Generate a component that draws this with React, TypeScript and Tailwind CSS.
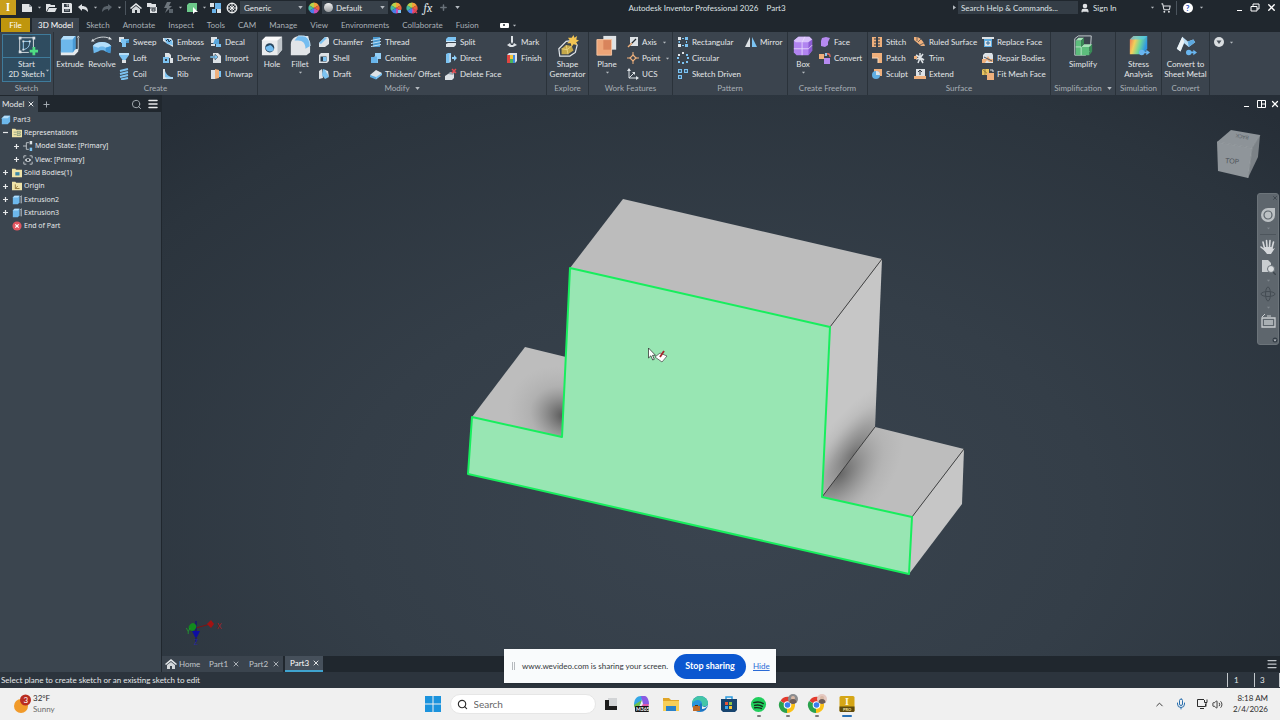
import type { ReactNode } from "react";
import { ChevronUp, Home, Menu, Mic, Plus, Search, ShoppingCart, User, Volume2, X } from "lucide-react";

const BLUE = "#7cc3f2";
const PALE = "#dde2e6";
const ORANGE = "#efb07c";
const PURPLE = "#b68af0";

// Small command icons, drawn on a 12 x 12 grid
const smallIcons: Record<string, ReactNode> = {
  sweep: (
    <>
      <path d="M1 1h5v5H1z" fill={PALE} />
      <path d="M3 3h8v4H8v4H4V7H3z" fill={BLUE} />
      <path d="M8 7h3V4L8 5z" fill="#4a9bd2" />
    </>
  ),
  loft: (
    <>
      <path d="M1 1h10v2L7.500 8h-3L1 3z" fill={BLUE} />
      <path d="M1 1h10v2H1z" fill="#b7def7" />
      <path d="M4 8h4v3H4z" fill={PALE} />
    </>
  ),
  coil: (
    <path d="M2 3 10 1M2 6l8-2M2 9l8-2M3 11.500l7-1.500" stroke={BLUE} strokeWidth="2" fill="none" />
  ),
  emboss: (
    <>
      <path d="M1 2h8l2 3v6L1 5z" fill={PALE} />
      <path d="m2 2 8 2 1 5-6-1z" fill={BLUE} />
      <path d="m4 5 2-2 1 3 2-2" stroke="#23405a" fill="none" />
    </>
  ),
  derive: (
    <>
      <path d="M3 1h4l2 2v3H3z" fill={PALE} />
      <path d="M1 5h6v6H1z" fill={BLUE} />
      <path d="M8 6h3v5H8z" fill={PALE} />
      <path d="M3 7h2v2H3z" fill="#3b444e" />
    </>
  ),
  rib: (
    <>
      <path d="M1 1h2v8h8v2H1z" fill={PALE} />
      <path d="M3 3c1 3 3 5 6 6H3z" fill={BLUE} />
      <path d="M3 9h8v2H5z" fill="#a9d7f5" />
    </>
  ),
  decal: (
    <>
      <path d="M1 1h6v6H1z" fill={PALE} />
      <path d="M5 3h4v5H3z" fill="#59a7dc" />
      <path d="M6 8h5v3H6z" fill={BLUE} />
      <path d="M1 8h4v2H1z" fill={PALE} />
    </>
  ),
  import: (
    <>
      <path d="M3 1h5l3 3v7H3z" fill={PALE} />
      <path d="M0 4h5V2l3 3-3 3V6H0z" fill={BLUE} stroke="#3b444e" strokeWidth=".5" />
    </>
  ),
  unwrap: (
    <>
      <path d="M1 2h4v9H1z" fill={PALE} />
      <path d="m5 1 4 1v8l-4 1z" fill={ORANGE} />
      <path d="M9 3h2v6H9z" fill={BLUE} />
    </>
  ),
  chamfer: (
    <>
      <path d="m1 7 6-6h3l1 2v5l-4 3H1z" fill={PALE} />
      <path d="m1 7 6-6 2 1-6 6z" fill={BLUE} />
    </>
  ),
  shell: (
    <>
      <path d="m1 3 2-2h8v8l-2 2H1z" fill={PALE} />
      <path d="M2.500 4.500h6v5h-6z" fill="#24384a" />
      <path d="M5 5h3.500v4H5z" fill={BLUE} />
    </>
  ),
  draft: (
    <>
      <path d="M1 3 4 1l1 9-4 1z" fill={PALE} />
      <path d="m5 1 3 1 3 7-4 2-3-4z" fill={BLUE} />
      <path d="m7 2 3 1 1 6z" fill={PALE} />
    </>
  ),
  thread: (
    <>
      <path d="M3 1h7v10H3z" fill="#4b9ad0" />
      <path d="M1 4.500 11 2.500M1 7.500l10-2M1 10.500l10-2" stroke="#bfe2f8" fill="none" />
    </>
  ),
  combine: (
    <>
      <path d="M5 1h6v6H5z" fill="#94d0f7" />
      <path d="M1 5h3l1-1h2v3h1v4H1z" fill={BLUE} />
      <path d="M1 5h6v6H1z" fill="#68b4ea" />
    </>
  ),
  thicken: (
    <>
      <path d="m0 7 6-5 6 3-6 6z" fill={PALE} />
      <path d="m0 7 6 2v2.500L0 9z" fill="#5aa9de" />
      <path d="M6 9l6-4v2l-6 4.500z" fill={BLUE} />
    </>
  ),
  split: (
    <>
      <path d="m1 3 2-2h8v3L9 5H1z" fill={BLUE} />
      <path d="M1 5.500h10" stroke="#cfe9fa" />
      <path d="m1 8 2-1h8v2l-2 2H1z" fill={PALE} />
    </>
  ),
  direct: (
    <>
      <path d="M1 2 3 1h3v9l-2 1H1z" fill={BLUE} />
      <path d="M5 2v8" stroke={PALE} />
      <path d="M7 5h2V3l3 3-3 3V7H7z" fill="#8fd0fa" />
    </>
  ),
  deleteFace: (
    <>
      <path d="m0 8 3-2h6v4l-2 2H0z" fill={PALE} />
      <path d="m3 6 2-2h5L8 7z" fill="#9aa5ae" />
      <path d="m7 1 4 4m0-4L7 5" stroke="#e5484d" strokeWidth="1.500" />
    </>
  ),
  mark: (
    <>
      <path d="M5 0h2v6l-1 2-1-2z" fill={PALE} />
      <path d="m1 9 3-2 1 2h2l1-2 3 2-4 2H4z" fill={PALE} />
    </>
  ),
  finish: (
    <>
      <path d="m1 3 2-2h8v8l-2 2H1z" fill={PALE} />
      <path d="M1 3h3v8H1z" fill="#e0453f" />
      <path d="M4 3h3v4H4z" fill="#f3c63c" />
      <path d="M4 7h3v4H4z" fill="#4cb35c" />
      <path d="M7 3h2v8H7z" fill="#3f8be0" />
    </>
  ),
  axis: (
    <>
      <path d="M3 1h8v9H3z" fill={PALE} />
      <path d="m2 10 7-7" stroke="#20282f" strokeWidth="1.300" />
      <path d="m1 11 4-4" stroke={ORANGE} strokeWidth="1.500" />
    </>
  ),
  point: (
    <>
      <path d="M6 0v12M0 6h12" stroke={ORANGE} />
      <path d="m6 3 3 3-3 3-3-3z" fill="#3b444e" stroke={ORANGE} strokeWidth="1.200" />
    </>
  ),
  ucs: (
    <>
      <path d="M2 1v9h9M2 10l5-5" stroke={PALE} fill="none" />
      <path d="m0 3 2-3 2 3zM9 8l3 2-3 2zM5 4h3v3z" fill={PALE} />
    </>
  ),
  rectangular: (
    <>
      <path d="M1 1h3v3H1zM1 8h3v3H1z" fill={PALE} />
      <path d="M5 2h2v1H5zM8 1h3v3H8zM8 8h3v3H8zM1.500 5h1.500v2H1.500zM9 5h1v2H9zM5 9h2v1H5z" fill={BLUE} />
    </>
  ),
  circular: (
    <>
      <path d="M5 0h2v2H5zM1 2h2v2H1z" fill={PALE} />
      <path d="M9 2h2v2H9zM10 5h2v2h-2zM9 9h2v2H9zM5 10h2v2H5zM1 9h2v2H1zM0 5h2v2H0z" fill={BLUE} />
    </>
  ),
  sketchDriven: (
    <>
      <path d="M1 1h4v4H1zM1 7h4v4H1zM7 1h4v4H7z" fill={BLUE} />
      <path d="M2 3h2M3 2v2M2 9h2M3 8v2M8 3h2M9 2v2" stroke="#25435c" />
    </>
  ),
  mirror: (
    <>
      <path d="M5 1v10H0z" fill={PALE} />
      <path d="M7 1v10h5z" fill={BLUE} />
    </>
  ),
  face: <path d="m3 2 4-1 4 1-2 4v3L6 11l-4-1V5z" fill={PURPLE} />,
  convert: (
    <>
      <path d="M0 2h5v5H0z" fill={ORANGE} />
      <path d="M5 6h6v6H5z" fill={PURPLE} />
      <path d="M6 4c0-3 5-3 5 0v1" stroke="#e06a5c" fill="none" strokeWidth="1.300" />
      <path d="M6 1h2v3H6z" fill="#8fc7ee" />
    </>
  ),
  stitch: (
    <>
      <path d="M1 1h4v10H1zM7 1h4v10H7z" fill={ORANGE} />
      <path d="M3 3h6M3 6h6M3 9h6" stroke="#333b44" />
    </>
  ),
  patch: (
    <>
      <path d="M1 1h10v10H7V6H1z" fill={ORANGE} />
      <path d="M1 6h6v5" stroke="#f7d9bd" fill="none" />
    </>
  ),
  sculpt: (
    <>
      <path d="M3 1h8v7H3z" fill={ORANGE} />
      <circle cx="5" cy="7" r="4" fill="#5faee2" />
      <path d="M5 3a4 4 0 0 1 4 4H5z" fill={PALE} />
    </>
  ),
  ruled: (
    <>
      <path d="M0 1h3c4 1 7 5 8 9H7C5 8 2 6 0 4z" fill={ORANGE} />
      <path d="m3 1 0 4M7 3 4 6m6 1-4 2" stroke="#3b444e" strokeWidth=".7" />
    </>
  ),
  trim: (
    <>
      <path d="m2 3 8 5M6 1v4M9 2 6 6l3 5M2 7l4-1-2 5" stroke={PALE} strokeWidth="1.500" fill="none" />
      <path d="M0 4h3v3H0z" fill={ORANGE} />
    </>
  ),
  extend: (
    <>
      <path d="M2 1h9v7H2z" fill={PALE} />
      <path d="M0 8h12v3H0z" fill={ORANGE} />
      <path d="M6 2v5M4 4l2-2 2 2" stroke="#333b44" fill="none" />
    </>
  ),
  replace: (
    <>
      <path d="M1 1h10l-1 2v8H2V3z" fill="#5faee2" />
      <path d="M0 1h12v2H0z" fill={PALE} />
      <path d="M3 5h6v5H3z" fill={PALE} />
      <path d="M6 5v4M4 7h4" stroke="#2d6a9c" />
    </>
  ),
  repair: (
    <>
      <path d="m1 3 2-2h7l1 2v8H1z" fill={PALE} />
      <path d="M0 7h4l2-3 2 3h3v3H7L5 8l-2 3H0z" fill={ORANGE} />
      <path d="m2 5 8 4" stroke="#4b5560" />
    </>
  ),
  fitMesh: (
    <>
      <path d="M0 1h7v6H0z" fill="#e9c560" />
      <path d="M0 1l7 6M3 1v6" stroke="#6b5b2e" strokeWidth=".6" />
      <path d="M5 5h7v7H5z" fill={ORANGE} />
      <path d="M8 2h3v2" stroke={PALE} fill="none" />
    </>
  ),
};

// Large command icons, drawn on a 24 x 24 grid
const bigIcons: Record<string, ReactNode> = {
  sketch: (
    <>
      <path d="M4 3h15v11M4 3v16h10" stroke={PALE} fill="none" />
      <path d="M3 2h3v3H3zM18 2h3v3h-3zM3 17h3v3H3z" fill={PALE} />
      <path d="M8 7h7M8 7v9c5-1 7-4 7-9" stroke="#9ed2f4" fill="none" />
      <path d="M7 6h2v2H7zM14 6h2v2h-2zM7 15h2v2H7z" fill={PALE} />
      <path d="M18 13h3v3h3v3h-3v3h-3v-3h-3v-3h3z" fill="#4fdc83" />
    </>
  ),
  extrude: (
    <>
      <path d="M2 18v4h15l4-4v-3z" fill="#e6eaed" />
      <path d="m2 5 3-4h13v14l-3 4H2z" fill="#6db8ec" />
      <path d="m2 5 3-4h13l-3 4z" fill="#b4defa" />
      <path d="m15 5 3-4v14l-3 4z" fill="#489ad6" />
      <path d="M21 3v13m-1-13 1-2 1 2" stroke="#cdd2d6" fill="none" />
    </>
  ),
  revolve: (
    <>
      <path d="M2 12C6 6 18 6 22 12l-1 8-5-2c-2-2-6-2-8 0l-5 2z" fill="#6db8ec" />
      <path d="M2 12C6 6 18 6 22 12l-6 2c-2-2-6-2-8 0z" fill="#b4defa" />
      <path d="m16 14 6-2-1 8-5-2z" fill="#3f93d2" />
      <path d="M2 6C7 2 15 1 21 4" stroke={PALE} fill="none" />
      <path d="m0 7 2-3 2 3zM20 2l3 3-4 0z" fill={PALE} />
    </>
  ),
  hole: (
    <>
      <path d="m1 6 4-4h18v14l-5 6H1z" fill="#e9ebed" />
      <path d="m1 6 4-4h18l-5 4z" fill="#fafafa" />
      <path d="m18 6 5-4v14l-5 6z" fill="#bfc5ca" />
      <circle cx="9.500" cy="14" r="5" fill="#26455e" />
      <path d="M5 13a5 5 0 0 0 9 3c0-2-2-4-4-5z" fill="#74bdf0" />
    </>
  ),
  fillet: (
    <>
      <path d="M2 22V10C2 5 6 1 11 1h10l2 10v8l-4 3z" fill="#e2e5e8" />
      <path d="M10 1h5c5 0 8 5 8 11l-5 3c0-6-3-9-8-9H6z" fill="#74bdf0" />
      <path d="M10 1h5c5 0 8 5 8 11" stroke="#c9e7fb" fill="none" />
    </>
  ),
  shape: (
    <>
      <path d="m2 15 8-8 8-1 4 5-2 8-6 4H3z" fill="none" stroke="#e1e5e8" strokeWidth="1.300" />
      <path d="m5 15 5-4 6 1 2 5-6 4H5z" fill="#c6a94a" />
      <path d="m5 15 6 1 5-4m-5 4 1 5M10 11l1 5" stroke="#f1dc8a" fill="none" strokeWidth=".8" />
      <path d="m18 0 1 3 3-2-1 4 3 1-3 2 1 3-4-1-2 3-1-4-4 0 3-3-2-3 4 0z" fill="#f3c553" />
    </>
  ),
  plane: (
    <>
      <path d="M8 1h14v15H8z" fill="#dfe3e6" />
      <path d="M1 5h16v17H1z" fill="#eda578" />
      <path d="M8 5h9v11H8z" fill="#d9845c" />
      <path d="M1 5h16v17H1z" fill="none" stroke="#f6c7a4" />
    </>
  ),
  box: (
    <>
      <path d="m2 6 5-4h12l3 3v12l-4 5H5l-3-3z" fill="#b184f0" />
      <path d="m2 6 5-4h12l3 3-4 3H4z" fill="#d8c0fb" />
      <path d="m18 8 4-3v12l-4 5z" fill="#8b5bd2" />
      <path d="M11 8v14M2 15h16l4-4M11 8l3-6" stroke="#e8dcfd" strokeWidth=".9" fill="none" />
    </>
  ),
  simplify: (
    <>
      <path d="M3 4 7 1h14l-1 16-5 5H3z" fill="none" stroke="#cfd5d9" />
      <path d="M4 6h6v7h9v9H4z" fill="#5dbd7c" />
      <path d="m4 6 3-3h6l-3 3zM10 13l3-3h9l-3 3z" fill="#a6e2b8" />
      <path d="M19 13l3-3v8l-3 4zM10 6l3-3v7l-3 3z" fill="#398b56" />
      <path d="M4 13h6v9" stroke="#d3f0dc" strokeWidth=".8" fill="none" />
    </>
  ),
  stress: (
    <>
      <defs>
        <linearGradient id="stress" x1="0" y1="0" x2="1" y2="0.300">
          <stop offset="0" stopColor="#ea6a52" />
          <stop offset=".35" stopColor="#f3cf5a" />
          <stop offset=".65" stopColor="#6ed79a" />
          <stop offset="1" stopColor="#2f97e4" />
        </linearGradient>
      </defs>
      <path d="m2 5 4-4h15v14l-5 6H2z" fill="url(#stress)" />
      <path d="m2 5 4-4h15l-4 4z" fill="#59c8e6" fillOpacity=".7" />
      <circle cx="15" cy="19" r="3" fill="#69b6f0" />
      <path d="M16 18h4v-2l4 3-4 3v-2h-4z" fill="#69b6f0" />
    </>
  ),
  sheet: (
    <>
      <path d="M2 15 8 2l6 5 6-2 2 3-7 5-5-4-4 9z" fill="#b9dcf4" />
      <path d="m2 15 6-13 2 5-4 11z" fill="#ecf1f4" />
      <path d="m14 7 6-2 2 3-7 5z" fill="#5da9df" />
      <circle cx="15" cy="19" r="3" fill="#69b6f0" />
      <path d="M16 18h4v-2l4 3-4 3v-2h-4z" fill="#69b6f0" />
    </>
  ),
};

function Caret({ className = "" }: { className?: string }) {
  return (
    <svg viewBox="0 0 6 4" className={`h-[3px] w-[5px] flex-none fill-[#b4babf] ${className}`} aria-hidden>
      <path d="M0 0h6L3 4z" />
    </svg>
  );
}

function Glyph({ name }: { name: string }) {
  return (
    <svg viewBox="0 0 12 12" className="h-3 w-3 flex-none" aria-hidden>
      {smallIcons[name]}
    </svg>
  );
}

interface Command {
  icon: string;
  label: string;
  menu?: boolean;
}

function CommandColumn({ items, className }: { items: Command[]; className: string }) {
  return (
    <div className={`flex flex-none flex-col pt-[2px] ${className}`}>
      {items.map((item) => (
        <button key={item.label} type="button" className="flex h-4 items-center gap-[3px] whitespace-nowrap">
          <Glyph name={item.icon} />
          <span>{item.label}</span>
          {item.menu && <Caret className="ml-[2px] scale-75" />}
        </button>
      ))}
    </div>
  );
}

interface BigCommandProps {
  icon: string;
  lines: string[];
  className: string;
  menu?: boolean;
}

function BigCommand({ icon, lines, className, menu }: BigCommandProps) {
  return (
    <button type="button" className={`flex flex-none flex-col items-center pt-[3px] leading-[10px] ${className}`}>
      <svg viewBox="0 0 24 24" className="mb-[2px] h-[22px] w-[22px]" aria-hidden>
        {bigIcons[icon]}
      </svg>
      {lines.map((line) => (
        <span key={line} className="whitespace-nowrap">
          {line}
        </span>
      ))}
      {menu && <Caret className="mt-[2px] scale-75" />}
    </button>
  );
}

interface PanelProps {
  title: string;
  className: string;
  menu?: boolean;
  children: ReactNode;
}

function Panel({ title, className, menu, children }: PanelProps) {
  return (
    <section className={`flex flex-none flex-col border-r border-[#2a323a] ${className}`}>
      <div className="flex h-[50px]">{children}</div>
      <h2 className="flex h-3 items-center justify-center gap-[5px] whitespace-nowrap text-[#a9b0b6]">
        {title}
        {menu && <Caret />}
      </h2>
    </section>
  );
}

function Ribbon() {
  return (
    <div className="flex h-[63px] flex-none overflow-hidden bg-[#3b444e]">
      <Panel title="Sketch" className="w-[54px]">
        <button
          type="button"
          className="relative mx-[2px] mt-[2px] flex h-12 flex-1 flex-col items-center border border-[#3f7b9b] bg-[#2f4c60] leading-[10px]"
        >
          <span className="mb-px flex h-[23px] w-full justify-center border-b border-[#3f7b9b]">
            <svg viewBox="0 0 24 24" className="h-[22px] w-[22px]" aria-hidden>
              {bigIcons.sketch}
            </svg>
          </span>
          <span>Start</span>
          <span>2D Sketch</span>
          <Caret className="absolute right-0 bottom-[9px] scale-75" />
        </button>
      </Panel>

      <Panel title="Create" className="w-[204px]">
        <BigCommand icon="extrude" lines={["Extrude"]} className="w-8" />
        <BigCommand icon="revolve" lines={["Revolve"]} className="w-8" />
        <CommandColumn
          className="w-11"
          items={[
            { icon: "sweep", label: "Sweep" },
            { icon: "loft", label: "Loft" },
            { icon: "coil", label: "Coil" },
          ]}
        />
        <CommandColumn
          className="w-12"
          items={[
            { icon: "emboss", label: "Emboss" },
            { icon: "derive", label: "Derive" },
            { icon: "rib", label: "Rib" },
          ]}
        />
        <CommandColumn
          className="w-12"
          items={[
            { icon: "decal", label: "Decal" },
            { icon: "import", label: "Import" },
            { icon: "unwrap", label: "Unwrap" },
          ]}
        />
      </Panel>

      <Panel title="Modify" menu className="w-[289px]">
        <BigCommand icon="hole" lines={["Hole"]} className="w-7" />
        <BigCommand icon="fillet" lines={["Fillet"]} menu className="w-7" />
        <CommandColumn
          className="ml-1 w-[52px]"
          items={[
            { icon: "chamfer", label: "Chamfer" },
            { icon: "shell", label: "Shell" },
            { icon: "draft", label: "Draft" },
          ]}
        />
        <CommandColumn
          className="w-[75px]"
          items={[
            { icon: "thread", label: "Thread" },
            { icon: "combine", label: "Combine" },
            { icon: "thicken", label: "Thicken/ Offset" },
          ]}
        />
        <CommandColumn
          className="w-[61px]"
          items={[
            { icon: "split", label: "Split" },
            { icon: "direct", label: "Direct" },
            { icon: "deleteFace", label: "Delete Face" },
          ]}
        />
        <CommandColumn
          className="w-10"
          items={[
            { icon: "mark", label: "Mark" },
            { icon: "finish", label: "Finish" },
          ]}
        />
      </Panel>

      <Panel title="Explore" className="w-[42px]">
        <BigCommand icon="shape" lines={["Shape", "Generator"]} className="w-[41px]" />
      </Panel>

      <Panel title="Work Features" className="w-[84px]">
        <BigCommand icon="plane" lines={["Plane"]} menu className="w-9" />
        <CommandColumn
          className="ml-[2px] w-11"
          items={[
            { icon: "axis", label: "Axis", menu: true },
            { icon: "point", label: "Point", menu: true },
            { icon: "ucs", label: "UCS" },
          ]}
        />
      </Panel>

      <Panel title="Pattern" className="w-[115px]">
        <CommandColumn
          className="ml-1 w-[68px]"
          items={[
            { icon: "rectangular", label: "Rectangular" },
            { icon: "circular", label: "Circular" },
            { icon: "sketchDriven", label: "Sketch Driven" },
          ]}
        />
        <CommandColumn className="w-10" items={[{ icon: "mirror", label: "Mirror" }]} />
      </Panel>

      <Panel title="Create Freeform" className="w-20">
        <BigCommand icon="box" lines={["Box"]} menu className="w-[30px]" />
        <CommandColumn
          className="ml-px w-12"
          items={[
            { icon: "face", label: "Face" },
            { icon: "convert", label: "Convert" },
          ]}
        />
      </Panel>

      <Panel title="Surface" className="w-[183px]">
        <CommandColumn
          className="ml-[3px] w-[43px]"
          items={[
            { icon: "stitch", label: "Stitch" },
            { icon: "patch", label: "Patch" },
            { icon: "sculpt", label: "Sculpt" },
          ]}
        />
        <CommandColumn
          className="w-[68px]"
          items={[
            { icon: "ruled", label: "Ruled Surface" },
            { icon: "trim", label: "Trim" },
            { icon: "extend", label: "Extend" },
          ]}
        />
        <CommandColumn
          className="w-16"
          items={[
            { icon: "replace", label: "Replace Face" },
            { icon: "repair", label: "Repair Bodies" },
            { icon: "fitMesh", label: "Fit Mesh Face" },
          ]}
        />
      </Panel>

      <Panel title="Simplification" menu className="w-[65px]">
        <BigCommand icon="simplify" lines={["Simplify"]} className="w-16" />
      </Panel>
      <Panel title="Simulation" className="w-[46px]">
        <BigCommand icon="stress" lines={["Stress", "Analysis"]} className="w-[45px]" />
      </Panel>
      <Panel title="Convert" className="w-12">
        <BigCommand icon="sheet" lines={["Convert to", "Sheet Metal"]} className="w-[47px]" />
      </Panel>

      <button type="button" aria-label="Ribbon options" className="ml-[3px] flex h-5 items-center gap-1">
        <svg viewBox="0 0 12 12" className="h-3 w-3">
          <circle cx="6" cy="6" r="5" fill="#d9dde0" />
          <path d="M3.500 4.500h5L6 8z" fill="#4a535c" />
        </svg>
        <Caret className="scale-75" />
      </button>
    </div>
  );
}

function ToolButton({ label, className = "h-4 w-4", children }: { label: string; className?: string; children: ReactNode }) {
  return (
    <button type="button" aria-label={label} className={`flex flex-none items-center justify-center ${className}`}>
      {children}
    </button>
  );
}

function MenuCaret({ label }: { label: string }) {
  return (
    <ToolButton label={label} className="h-4 w-2">
      <Caret className="scale-75" />
    </ToolButton>
  );
}

function ToolIcon({ children }: { children: ReactNode }) {
  return (
    <svg viewBox="0 0 12 12" className="h-3 w-3 flex-none" aria-hidden>
      {children}
    </svg>
  );
}

function ColorBall({ children }: { children?: ReactNode }) {
  return (
    <ToolIcon>
      <path d="M6 6V.500A5.500 5.500 0 0 1 10.800 3.200z" fill="#f2a33a" />
      <path d="M6 6l4.800-2.800a5.500 5.500 0 0 1 0 5.600z" fill="#e8643c" />
      <path d="M6 6l4.800 2.800A5.500 5.500 0 0 1 6 11.500z" fill="#c94fb4" />
      <path d="M6 6v5.500a5.500 5.500 0 0 1-4.800-2.700z" fill="#4a7fe8" />
      <path d="M6 6 1.200 8.800a5.500 5.500 0 0 1 0-5.600z" fill="#45b9a0" />
      <path d="M6 6 1.200 3.200A5.500 5.500 0 0 1 6 .500z" fill="#b9d24a" />
      {children}
    </ToolIcon>
  );
}

function Combo({ label, value, className }: { label: string; value: string; className: string }) {
  return (
    <span className="relative flex flex-none items-center">
      <select
        aria-label={label}
        defaultValue={value}
        className={`h-[13px] appearance-none bg-[#38414a] text-[#e4e7e9] outline-none ${className}`}
      >
        <option>{value}</option>
      </select>
      <Caret className="pointer-events-none absolute right-[3px]" />
    </span>
  );
}

function TitleBar() {
  return (
    <header className="flex h-[15px] flex-none items-center bg-[#20272e] text-[#dfe2e5]">
      <button type="button" aria-label="Application menu" className="mr-[3px] flex h-[15px] w-4 flex-none items-center justify-center bg-[#c99f1c]">
        <span className="font-serif text-[11px] leading-none font-bold text-white">I</span>
      </button>
      <ToolButton label="New">
        <ToolIcon>
          <path d="M1 2h7l3 3v5H1z" fill="#dfe2e5" />
          <path d="M8 2v3h3z" fill="#8d959c" />
        </ToolIcon>
      </ToolButton>
      <MenuCaret label="New options" />
      <ToolButton label="Open">
        <ToolIcon>
          <path d="M1 2h4l1 1h4v2H4l-3 5z" fill="#dfe2e5" />
          <path d="M4 6h8l-2 4H2z" fill="#dfe2e5" />
        </ToolIcon>
      </ToolButton>
      <ToolButton label="Save">
        <ToolIcon>
          <path d="M1 1h9l1 1v9H1z" fill="#dfe2e5" />
          <path d="M3 2h5v3H3zM3 7h6v3H3z" fill="#323b44" />
          <path d="M4 8h4M6 2h1v2H6z" stroke="#dfe2e5" strokeWidth=".7" />
        </ToolIcon>
      </ToolButton>
      <ToolButton label="Undo">
        <ToolIcon>
          <path d="m1 5 4-3v2c4 0 6 2 6 6-2-2-3-3-6-3v2z" fill="#dfe2e5" />
        </ToolIcon>
      </ToolButton>
      <MenuCaret label="Undo history" />
      <ToolButton label="Redo">
        <ToolIcon>
          <path d="M11 5 7 2v2C3 4 1 6 1 10c2-2 3-3 6-3v2z" fill="#59626a" />
        </ToolIcon>
      </ToolButton>
      <MenuCaret label="Redo history" />
      <span className="mx-[2px] h-[14px] w-px bg-[#4b545d]" />
      <ToolButton label="Home">
        <ToolIcon>
          <path d="M0 6 6 1l6 5-1 1-5-4-5 4z" fill="#e6e9eb" />
          <path d="m2 7 4-3 4 3v4H7V8H5v3H2z" fill="#d3d7da" />
        </ToolIcon>
      </ToolButton>
      <ToolButton label="Projects">
        <ToolIcon>
          <path d="M1 1h4l1 1h4v3H1zM4 5h7v6H4z" fill="#dfe2e5" />
          <path d="M3 6h7M6 7h3v2H6z" stroke="#343d45" fill="none" />
        </ToolIcon>
      </ToolButton>
      <ToolButton label="Update">
        <ToolIcon>
          <path d="M5 0h4L7 4h3L3 11l2-5H2z" fill="#6d757c" />
          <path d="M7 7h4v4H7z" fill="#59626a" />
        </ToolIcon>
      </ToolButton>
      <MenuCaret label="Update options" />
      <ToolButton label="Select">
        <ToolIcon>
          <path d="m1 3 2-2h8v7l-2 2H1z" fill="#6cc98a" />
          <path d="M7 5v7l2-2h3z" fill="#fff" />
        </ToolIcon>
      </ToolButton>
      <MenuCaret label="Selection filters" />
      <ToolButton label="Components">
        <ToolIcon>
          <path d="M0 1h4v4H0z" fill={PALE} />
          <path d="M5 1h6v6H5zM2 7h4v4H2z" fill="#6bb4ea" />
          <path d="M7 7h4v4H7z" fill={PALE} />
        </ToolIcon>
      </ToolButton>
      <ToolButton label="Appearance wheel">
        <ToolIcon>
          <circle cx="6" cy="6" r="4.700" fill="#20272e" stroke="#eceeef" strokeWidth="1.500" />
          <path d="M6 2v8M2 6h8M3.500 3.500l5 5m0-5-5 5" stroke="#eceeef" />
        </ToolIcon>
      </ToolButton>
      <Combo label="Material" value="Generic" className="w-[66px] pl-1" />
      <ToolButton label="Materials">
        <ColorBall />
      </ToolButton>
      <span className="relative flex items-center">
        <Combo label="Appearance" value="Default" className="w-[66px] pl-[14px]" />
        <span className="pointer-events-none absolute left-[2px] h-[9px] w-[9px] rounded-full bg-gradient-to-b from-[#f1f1f1] to-[#9b9ea1]" />
      </span>
      <ToolButton label="Adjust appearance">
        <ColorBall>
          <path d="M8 8h3v3H8z" fill="#7cc3f2" />
        </ColorBall>
      </ToolButton>
      <ToolButton label="Clear appearance">
        <ColorBall>
          <path d="m7 7 4 4m0-4-4 4" stroke="#e5484d" strokeWidth="1.500" />
        </ColorBall>
      </ToolButton>
      <ToolButton label="Parameters">
        <span className="font-serif text-[12px] leading-none italic">fx</span>
      </ToolButton>
      <ToolButton label="Add" className="h-4 w-[14px]">
        <Plus className="h-[9px] w-[9px] text-[#69727a]" strokeWidth={4} />
      </ToolButton>
      <ToolButton label="Customize" className="h-4 w-[14px]">
        <Caret />
      </ToolButton>

      <h1 className="flex-1 text-center whitespace-pre">Autodesk Inventor Professional 2026{"    "}Part3</h1>

      <ToolButton label="Expand search" className="h-4 w-2">
        <Caret className="-rotate-90" />
      </ToolButton>
      <input
        aria-label="Search help"
        placeholder="Search Help & Commands..."
        className="h-[13px] w-[120px] flex-none bg-[#343d46] px-[3px] outline-none placeholder:text-[#dfe2e5]"
      />
      <button type="button" className="ml-[2px] flex w-[68px] flex-none items-center gap-[3px]">
        <User className="h-[10px] w-[10px] fill-current" strokeWidth={3} />
        Sign In
      </button>
      <MenuCaret label="Account options" />
      <ToolButton label="App store" className="h-4 w-5">
        <ShoppingCart className="h-[10px] w-[10px]" strokeWidth={2.500} />
      </ToolButton>
      <span className="h-[14px] w-px flex-none bg-[#4b545d]" />
      <ToolButton label="Help" className="ml-px h-4 w-[19px]">
        <span className="flex h-[10px] w-[10px] items-center justify-center rounded-full bg-white font-bold text-[#2c4fc0]">?</span>
      </ToolButton>
      <MenuCaret label="Help options" />
      <span className="flex-none pl-[26px]" />
      <ToolButton label="Minimize">
        <span className="mt-[6px] h-px w-[5px] bg-white" />
      </ToolButton>
      <ToolButton label="Restore">
        <ToolIcon>
          <path d="M4 4V2h6v5H8M2 4.500h6V9H2z" stroke="#fff" fill="none" />
        </ToolIcon>
      </ToolButton>
      <ToolButton label="Close" className="mr-px h-4 w-4">
        <X className="h-[11px] w-[11px] text-white" strokeWidth={3} />
      </ToolButton>
    </header>
  );
}

const ribbonTabs = ["Sketch", "Annotate", "Inspect", "Tools", "CAM", "Manage", "View", "Environments", "Collaborate", "Fusion"];

function RibbonTabs() {
  return (
    <nav className="flex h-[17px] flex-none items-end bg-[#20272e] pl-px text-[#a9b0b6]">
      <button type="button" className="mr-[2px] h-[14px] w-[29px] bg-[#bf960d] text-white">
        File
      </button>
      <button type="button" className="mr-px h-[14px] bg-[#3b444e] px-[6px] text-white">
        3D Model
      </button>
      {ribbonTabs.map((tab) => (
        <button key={tab} type="button" className="h-[14px] pr-[7px] pl-[6px]">
          {tab}
        </button>
      ))}
      <button type="button" aria-label="Ribbon display" className="ml-[14px] flex h-[14px] items-center gap-[3px]">
        <span className="flex h-[5px] w-[9px] items-center justify-center rounded-[1px] bg-white">
          <span className="h-[2px] w-[2px] rounded-full bg-[#20272e]" />
        </span>
        <Caret className="scale-75" />
      </button>
    </nav>
  );
}

const treeIcons: Record<string, ReactNode> = {
  part: (
    <>
      <path d="m1 4 3-3h7v7l-3 3H1z" fill="#6db8ec" />
      <path d="m1 4 3-3h7L8 4z" fill="#b4defa" />
    </>
  ),
  folder: (
    <>
      <path d="M0 1h4l1 1h7v9H0z" fill="#efe3a8" />
      <path d="M2 5h3M2 8h3M6 4h4v2H6zM6 7h4v2H6z" stroke="#5f7d6c" strokeWidth=".7" fill="none" />
    </>
  ),
  state: (
    <>
      <path d="M0 6h4m0 0V2h3M4 6v4h3" stroke="#cfd4d8" fill="none" />
      <path d="M8 0h3v4H8z" fill={PALE} />
      <path d="M8 8h3v4H8z" fill={BLUE} />
    </>
  ),
  view: (
    <>
      <path d="M1 4V1h3M8 1h3v3M11 8v3H8M4 11H1V8" stroke="#cfd4d8" fill="none" />
      <path d="M2 6c2-3 6-3 8 0-2 3-6 3-8 0z" fill="#cfd4d8" />
      <circle cx="6" cy="6" r="1.400" fill="#2c353e" />
    </>
  ),
  bodies: (
    <>
      <path d="M0 1h4l1 1h7v9H0z" fill="#efe3a8" />
      <path d="M4 5h5v4H4z" fill="#3987a8" />
    </>
  ),
  origin: (
    <>
      <path d="M0 1h4l1 1h7v9H0z" fill="#efe3a8" />
      <path d="M4 4v5h5M4 9l3-3" stroke="#8c7033" fill="none" />
    </>
  ),
  extrusion: (
    <>
      <path d="m1 3 2-2h6v8l-2 2H1z" fill="#6db8ec" />
      <path d="m1 3 2-2h6L7 3z" fill="#b4defa" />
      <path d="M11 2v8m-1-8 1-1 1 1" stroke="#e2e6e9" fill="none" />
    </>
  ),
  end: (
    <>
      <circle cx="6" cy="6" r="5.500" fill="#e25560" />
      <path d="m4 4 4 4m0-4L4 8" stroke="#fff" strokeWidth="1.500" />
    </>
  ),
};

interface TreeItem {
  icon: string;
  label: string;
  level: number;
  toggle?: "plus" | "minus";
}

const tree: TreeItem[] = [
  { icon: "part", label: "Part3", level: 0 },
  { icon: "folder", label: "Representations", level: 1, toggle: "minus" },
  { icon: "state", label: "Model State: [Primary]", level: 2, toggle: "plus" },
  { icon: "view", label: "View: [Primary]", level: 2, toggle: "plus" },
  { icon: "bodies", label: "Solid Bodies(1)", level: 1, toggle: "plus" },
  { icon: "origin", label: "Origin", level: 1, toggle: "plus" },
  { icon: "extrusion", label: "Extrusion2", level: 1, toggle: "plus" },
  { icon: "extrusion", label: "Extrusion3", level: 1, toggle: "plus" },
  { icon: "end", label: "End of Part", level: 1 },
];

const levelPadding = ["pl-px", "pl-[2px]", "pl-[13px]"];

function ModelBrowser() {
  return (
    <aside className="flex w-[162px] flex-none flex-col border-r border-[#20272e] bg-[#3b454f] text-[#e6e8ea]">
      <div className="flex h-[17px] flex-none items-center bg-[#20272e] pt-px">
        <div className="flex h-full w-[38px] items-center gap-[3px] bg-[#3b454f] pl-[2px]">
          <span>Model</span>
          <button type="button" aria-label="Close browser">
            <X className="h-2 w-2" strokeWidth={3} />
          </button>
        </div>
        <button type="button" aria-label="Add browser" className="ml-1">
          <Plus className="h-[9px] w-[9px] text-[#a9b0b6]" strokeWidth={2.500} />
        </button>
        <button type="button" aria-label="Search browser" className="ml-auto">
          <Search className="h-[11px] w-[11px] text-[#a9b0b6]" />
        </button>
        <button type="button" aria-label="Browser menu" className="mr-[2px] ml-[5px]">
          <Menu className="h-3 w-3" strokeWidth={3} />
        </button>
      </div>
      <ul className="mt-px flex h-[120px] flex-col font-['Noto_Sans',sans-serif] text-[7px]">
        {tree.map((item) => (
          <li key={item.label} className={`flex flex-1 items-center gap-[2px] ${levelPadding[item.level]}`}>
            {item.level > 0 && (
              <span className="flex w-2 flex-none">
                {item.toggle && (
                  <svg viewBox="0 0 7 7" className="h-[7px] w-[7px]" aria-hidden>
                    <path d={item.toggle === "plus" ? "M1 3.500h5M3.500 1v5" : "M1 3.500h5"} stroke="#e6e8ea" strokeWidth="1.200" />
                  </svg>
                )}
              </span>
            )}
            <svg viewBox="0 0 12 12" className="h-[10px] w-[10px] flex-none" aria-hidden>
              {treeIcons[item.icon]}
            </svg>
            <span className="whitespace-nowrap">{item.label}</span>
          </li>
        ))}
      </ul>
    </aside>
  );
}

function PartDrawing() {
  return (
    <svg viewBox="162 95 1118 561" preserveAspectRatio="xMidYMid meet" className="absolute inset-0 h-full w-full">
      <defs>
        <radialGradient
          id="leftShade"
          gradientUnits="userSpaceOnUse"
          cx="0"
          cy="0"
          r="1"
          gradientTransform="translate(564 416) rotate(-65) scale(48 58)"
        >
          <stop offset="0" stopColor="#333" stopOpacity=".75" />
          <stop offset=".3" stopColor="#444" stopOpacity=".42" />
          <stop offset=".6" stopColor="#666" stopOpacity=".14" />
          <stop offset="1" stopColor="#888" stopOpacity="0" />
        </radialGradient>
        <radialGradient
          id="wallShade"
          gradientUnits="userSpaceOnUse"
          cx="0"
          cy="0"
          r="1"
          gradientTransform="translate(853 455) rotate(-53) scale(90 36)"
        >
          <stop offset="0" stopColor="#444" stopOpacity=".65" />
          <stop offset=".4" stopColor="#555" stopOpacity=".34" />
          <stop offset=".7" stopColor="#777" stopOpacity=".12" />
          <stop offset="1" stopColor="#999" stopOpacity="0" />
        </radialGradient>
        <radialGradient
          id="stepShade"
          gradientUnits="userSpaceOnUse"
          cx="0"
          cy="0"
          r="1"
          gradientTransform="translate(839 474) rotate(-48) scale(80 48)"
        >
          <stop offset="0" stopColor="#333" stopOpacity=".65" />
          <stop offset=".35" stopColor="#444" stopOpacity=".34" />
          <stop offset=".7" stopColor="#777" stopOpacity=".12" />
          <stop offset="1" stopColor="#888" stopOpacity="0" />
        </radialGradient>
      </defs>
      <path d="M623 199 882 259 830 327 570 268z" fill="#bcbcbc" />
      <path d="M830 327 882 259 875 427 822 497z" fill="#c6c6c6" />
      <path d="M830 327 882 259 875 427 822 497z" fill="url(#wallShade)" />
      <path d="M472 417 525 347 566 357 562 437z" fill="#bdbdbd" />
      <path d="M472 417 525 347 566 357 562 437z" fill="url(#leftShade)" />
      <path d="M822 497 875 427 964 449 912 517z" fill="#bdbdbd" />
      <path d="M822 497 875 427 964 449 912 517z" fill="url(#stepShade)" />
      <path d="M912 517 964 449 962 504 909 574z" fill="#c6c6c6" />
      <path d="M830 327 882 259M822 497 875 427M912 517 964 449" stroke="#2b2b2b" strokeWidth=".8" />
      <path
        d="M570 268 830 327 822 497 912 517 909 574 468 474 472 417 562 437z"
        fill="#98e6b3"
        stroke="#17ee5d"
        strokeWidth="2"
        strokeLinejoin="round"
      />

      {/* pointer with the sketch-plane badge */}
      <path d="M648.500 348v10l2.400-2.200 1.800 4.200 1.600-.7-1.800-4h3z" fill="#fff" stroke="#222" strokeWidth=".7" />
      <path d="m655 357 5-4 7 3-5 6z" fill="#fff" stroke="#444" strokeWidth=".7" />
      <path d="m660 357 4-6" stroke="#a4262c" strokeWidth="1.800" />

      {/* axis triad */}
      <path d="m196 628 14-4" stroke="#7d1313" />
      <path d="M196 621v21" stroke="#17176f" strokeWidth="1.500" />
      <ellipse cx="192.500" cy="627" rx="3.500" ry="4" transform="rotate(40 192.500 627)" fill="#128a1e" />
      <path d="m207 624 4-4 3 4-3 4z" fill="#a31212" />
      <path d="M192 631h8l-3 6h-2z" fill="#0d0da5" />
      <text x="217" y="629" fontSize="7" fill="#a81c1c">
        X
      </text>
      <text x="186" y="634" fontSize="7" fill="#1ea62b">
        Y
      </text>
      <text x="194" y="645" fontSize="7" fill="#2a2a9a">
        Z
      </text>
    </svg>
  );
}

function ViewCube() {
  return (
    <svg viewBox="0 0 46 50" className="absolute top-[34px] right-[19px] h-[50px] w-[46px]" aria-label="View cube">
      <path d="m2 13 14-12 29 5-8 13z" fill="#8d9398" />
      <path d="m2 13 35 6-4 30-30-7z" fill="#8f959a" />
      <path d="m37 19 8-13-2 22-10 21z" fill="#7c8287" />
      <path d="m2 13 35 6 8-13M37 19l-4 30" stroke="#a2a7ab" fill="none" strokeWidth=".6" />
      <text x="10" y="34" fontSize="7" fill="#50565b" transform="rotate(5 10 34)">
        TOP
      </text>
      <text x="34" y="7" fontSize="5" fill="#5c6267" transform="rotate(190 34 7)">
        BACK
      </text>
    </svg>
  );
}

function NavBar() {
  return (
    <div className="absolute top-[98px] right-px flex h-[152px] w-[22px] flex-col items-center rounded-[3px] border border-[#6c747a] bg-[#5e666d] py-px text-[#c9cdd0]">
      <button type="button" aria-label="Close navigation bar" className="mb-[6px] self-end">
        <X className="h-[6px] w-[6px] text-[#343d46]" strokeWidth={3} />
      </button>
      <button type="button" aria-label="Full navigation wheel">
        <svg viewBox="0 0 16 16" className="h-4 w-4">
          <path d="M8 1h7v7a7 7 0 1 1-7-7z" fill="#bcc1c4" />
          <circle cx="8" cy="8" r="4" fill="#bcc1c4" stroke="#5e666d" strokeWidth="1.200" />
        </svg>
      </button>
      <Caret className="my-1 scale-75 opacity-40" />
      <span className="mb-1 h-px w-4 flex-none bg-[#4d555c]" />
      <button type="button" aria-label="Pan">
        <svg viewBox="0 0 16 16" className="h-4 w-4">
          <path
            d="M4.500 9 3 3M7 8 6.500 1.500M9.500 8 10 1.500M12 9l1.500-6M6 12 1 8"
            stroke="#d4d7da"
            strokeWidth="1.600"
            strokeLinecap="round"
          />
          <path d="M4 8h8l1 2 2-1-4 6H7L4 11z" fill="#d4d7da" />
        </svg>
      </button>
      <button type="button" aria-label="Zoom" className="mt-1">
        <svg viewBox="0 0 16 16" className="h-4 w-4">
          <path d="M2 1h6l3 3v9H2z" fill="#c9cdd0" />
          <circle cx="11" cy="10" r="3.500" fill="#d9dcde" stroke="#6a7279" />
          <path d="m13 13 3 3" stroke="#3f474e" strokeWidth="1.500" />
        </svg>
      </button>
      <Caret className="my-1 scale-75 opacity-40" />
      <button type="button" aria-label="Orbit">
        <svg viewBox="0 0 16 16" className="h-4 w-4" fill="none" stroke="#454d54">
          <ellipse cx="8" cy="8" rx="7" ry="2.500" />
          <ellipse cx="8" cy="8" rx="2.500" ry="7" />
        </svg>
      </button>
      <Caret className="my-1 scale-75 opacity-40" />
      <button type="button" aria-label="Look at">
        <svg viewBox="0 0 16 16" className="h-4 w-4">
          <path d="M2 5h13v9H2z" fill="none" stroke="#c9cdd0" strokeWidth="1.300" />
          <path d="M4 7h9v5H4z" fill="#a9afb3" />
          <path d="M2 4 5 1M7 3h4" stroke="#c9cdd0" />
        </svg>
      </button>
      <button type="button" aria-label="Navigation bar options" className="mt-auto self-end">
        <svg viewBox="0 0 6 6" className="h-[6px] w-[6px]">
          <circle cx="3" cy="3" r="2.500" fill="#343d46" />
          <path d="M1.500 2.500h3L3 4.500z" fill="#c9cdd0" />
        </svg>
      </button>
    </div>
  );
}

function Viewport() {
  return (
    <main className="relative min-h-0 flex-1 bg-[radial-gradient(ellipse_75%_95%_at_50%_75%,#3a444f_0%,#343e48_45%,#2b343d_85%,#262e37_100%)]">
      <PartDrawing />
      <ViewCube />
      <NavBar />
      <div className="absolute top-[3px] right-0 flex items-center text-white">
        <ToolButton label="Minimize document" className="h-3 w-[15px]">
          <span className="mt-[5px] h-px w-[5px] bg-white" />
        </ToolButton>
        <ToolButton label="Tile document" className="h-3 w-[15px]">
          <svg viewBox="0 0 9 8" className="h-2 w-[9px]" fill="none" stroke="#fff">
            <path d="M.5.500h8v7h-8zM4.500.500v7M4.500 4h4" />
          </svg>
        </ToolButton>
        <ToolButton label="Close document" className="h-3 w-[11px]">
          <X className="h-[10px] w-[10px]" strokeWidth={3} />
        </ToolButton>
      </div>
    </main>
  );
}

function DocumentTabs() {
  return (
    <nav className="flex h-4 flex-none items-stretch bg-[#20272e] text-[#c0c5ca]">
      <button type="button" className="flex w-[41px] items-center gap-[2px] bg-[#3b444e] pl-[3px]">
        <ToolIcon>
          <path d="M0 6 6 1l6 5-1 1-5-4-5 4z" fill="#e6e9eb" />
          <path d="m2 7 4-3 4 3v4H7V8H5v3H2z" fill="#d3d7da" />
        </ToolIcon>
        Home
      </button>
      {["Part1", "Part2"].map((name) => (
        <span key={name} className="flex w-10 items-center justify-between bg-[#3b444e] pr-[3px] pl-[6px]">
          {name}
          <button type="button" aria-label={`Close ${name}`}>
            <X className="h-2 w-2" strokeWidth={2.500} />
          </button>
        </span>
      ))}
      <span className="ml-[2px] flex w-[38px] items-center justify-between border-b-2 border-[#3fa3cf] bg-[#46505b] pr-[3px] pl-[5px] text-white">
        Part3
        <button type="button" aria-label="Close Part3">
          <X className="h-2 w-2" strokeWidth={2.500} />
        </button>
      </span>
      <button type="button" aria-label="Document list" className="mr-[2px] ml-auto">
        <Menu className="h-3 w-3" strokeWidth={2.500} />
      </button>
    </nav>
  );
}

function SharingBanner() {
  return (
    <div className="absolute bottom-[37px] left-1/2 flex h-[34px] w-[272px] -translate-x-1/2 items-center bg-[#f9fbfc] pl-2 text-[#33373b] shadow">
      <span className="mr-[7px] h-2 w-[3px] flex-none border-x border-[#b5b9bd]" />
      <span className="w-[152px] flex-none whitespace-nowrap">www.wevideo.com is sharing your screen.</span>
      <button type="button" className="h-[25px] w-[72px] flex-none rounded-full bg-[#0b57d0] text-[9px] font-bold text-white">
        Stop sharing
      </button>
      <a href="#hide" className="ml-[7px] text-[#2b6bd6] underline">
        Hide
      </a>
    </div>
  );
}

function ChromeLogo({ face }: { face: string }) {
  return (
    <svg viewBox="0 0 20 20" className="h-5 w-5">
      <path d="M9 11 2.500 7A8 8 0 0 1 16.500 7z" fill="#e33b2e" />
      <path d="M9 11 9.500 19A8 8 0 0 1 2 7z" fill="#2aa24c" />
      <path d="m9 11 8-3v4a8 8 0 0 1-8 7z" fill="#fbc116" />
      <circle cx="9.500" cy="11" r="3.800" fill="#fff" />
      <circle cx="9.500" cy="11" r="2.800" fill="#3b7ded" />
      <circle cx="15" cy="5" r="5" fill={face} />
      <circle cx="15" cy="4" r="2" fill="#d9b8a4" />
      <path d="M11.500 8.500a3.500 3.500 0 0 1 7 0A5 5 0 0 1 11.500 8.500z" fill="#6c5d58" />
    </svg>
  );
}

interface TaskApp {
  label: string;
  icon: ReactNode;
  state?: "running" | "active";
}

const apps: TaskApp[] = [
  {
    label: "Microsoft 365",
    icon: (
      <svg viewBox="0 0 18 18" className="h-[18px] w-[18px]">
        <path d="M2 10C2 4 5 1 9 1h2L8 10l-4 3z" fill="#35a7e6" />
        <path d="M2 10c0 3 2 4 4 4l4-9z" fill="#6bc04b" />
        <path d="M9 1h4c2 0 4 4 4 8h-6z" fill="#8b5be2" />
        <path d="M11 9h6c0 2-2 4-4 4H8z" fill="#e05aa8" />
        <rect x="3" y="11" width="14" height="6" rx="1" fill="#141414" />
        <text x="4" y="16" fontSize="5" fontWeight="700" fill="#fff">
          M365
        </text>
      </svg>
    ),
  },
  {
    label: "File Explorer",
    icon: (
      <svg viewBox="0 0 18 18" className="h-[18px] w-[18px]">
        <path d="M1 3h6l2 2h8v11H1z" fill="#e0a528" />
        <path d="M1 6h16v10H1z" fill="#f8cf58" />
        <path d="M4 11h10v5H4z" fill="#2b82c9" />
      </svg>
    ),
  },
  {
    label: "Edge",
    icon: (
      <svg viewBox="0 0 18 18" className="h-[18px] w-[18px]">
        <circle cx="9" cy="9" r="8" fill="#1c74c4" />
        <path d="M1 9C1 4 5 1 9 1s8 3 8 7-5 4-6 3c1-5-6-6-10-2z" fill="#43c6a7" />
        <path d="M1 9c2-5 9-5 10-1-3 0-4 4-1 9C4 17 1 13 1 9z" fill="#2795dc" />
        <path d="M11 11c2 2 4 1 6-1-1 2-3 4-6 4z" fill="#f0f0f0" />
        <path d="M2 11h7v5H2z" fill="#bd6a28" />
        <path d="M4 10h3v1H4z" fill="#5f3413" />
      </svg>
    ),
  },
  {
    label: "Microsoft Store",
    icon: (
      <svg viewBox="0 0 18 18" className="h-[18px] w-[18px]">
        <path d="M6 4V2h6v2" stroke="#2b9ae0" fill="none" strokeWidth="1.500" />
        <path d="M1 4h16v11l-2 2H3l-2-2z" fill="#17446f" />
        <path d="M5 7h3v3H5z" fill="#e8553a" />
        <path d="M9 7h3v3H9z" fill="#8bc34a" />
        <path d="M5 11h3v3H5z" fill="#37a6ee" />
        <path d="M9 11h3v3H9z" fill="#f7c634" />
      </svg>
    ),
  },
  {
    label: "Spotify",
    state: "running",
    icon: (
      <svg viewBox="0 0 18 18" className="h-[17px] w-[17px]">
        <circle cx="9" cy="9" r="8" fill="#20ce5c" />
        <path d="M4 7c4-1 7-1 10 1M5 10c3-1 5-1 8 1M5 12.500c3-.500 4-.500 7 .700" stroke="#14301d" strokeWidth="1.500" fill="none" strokeLinecap="round" />
      </svg>
    ),
  },
  { label: "Chrome, work profile", state: "running", icon: <ChromeLogo face="#8b8d90" /> },
  { label: "Chrome, personal profile", state: "running", icon: <ChromeLogo face="#e5c8c0" /> },
  {
    label: "Inventor",
    state: "active",
    icon: (
      <svg viewBox="0 0 18 18" className="h-[18px] w-[18px]">
        <rect x="1.500" y="1" width="15" height="16" rx="1.500" fill="#d5a616" />
        <path d="M1.500 11.500h15V16l-1 1h-13l-1-1z" fill="#5d4a0e" />
        <text x="7" y="10" fontSize="10" fontWeight="700" fontFamily="Liberation Serif, serif" fill="#fff8df">
          I
        </text>
        <text x="5" y="16" fontSize="4" fontWeight="700" fill="#f4e3a4">
          PRO
        </text>
      </svg>
    ),
  },
];

function Taskbar() {
  return (
    <footer className="grid h-8 flex-none grid-cols-[1fr_auto_1fr] items-center bg-[#f0f0f0] text-[#2d2d2d]">
      <button type="button" className="flex items-center gap-[2px] pl-[13px] text-left leading-[11px]">
        <svg viewBox="0 0 18 20" className="h-5 w-[18px]" aria-hidden>
          <circle cx="8" cy="12" r="7" fill="#f19a2a" />
          <circle cx="12.500" cy="6" r="5.500" fill="#b92d21" />
          <text x="10.500" y="9" fontSize="8" fill="#fff">
            3
          </text>
        </svg>
        <span className="flex flex-col">
          <span>32°F</span>
          <span className="text-[#6b6b6b]">Sunny</span>
        </span>
      </button>

      <div className="flex items-center">
        <button type="button" aria-label="Start" className="flex w-[29px] justify-center">
          <svg viewBox="0 0 16 16" className="h-4 w-4" fill="#1b93dd">
            <path d="M0 0h7.500v7.500H0zM8.500 0H16v7.500H8.500zM0 8.500h7.500V16H0zM8.500 8.500H16V16H8.500z" />
          </svg>
        </button>
        <label className="mr-[2px] ml-[2px] flex h-5 w-[146px] items-center gap-[6px] rounded-full border border-[#e6e6e6] bg-white pl-[6px]">
          <Search className="h-[11px] w-[11px] flex-none" strokeWidth={2.500} />
          <input aria-label="Search" placeholder="Search" className="min-w-0 flex-1 text-[10px] outline-none placeholder:text-[#666]" />
        </label>
        <button type="button" aria-label="Task view" className="mr-[2px] flex w-[27px] justify-center">
          <svg viewBox="0 0 14 14" className="h-[14px] w-[14px]">
            <path d="M4 1h9v9H4z" fill="#d2d4d6" />
            <path d="M1 3h4v6h8v4H1z" fill="#1c1c1c" />
          </svg>
        </button>
        <div className="flex w-[235px]">
          {apps.map((app) => (
            <button key={app.label} type="button" aria-label={app.label} className="relative flex h-8 flex-1 items-center justify-center">
              {app.icon}
              {app.state === "running" && <span className="absolute bottom-[3px] h-[2px] w-1 rounded-full bg-[#7b7b7b]" />}
              {app.state === "active" && <span className="absolute bottom-[3px] h-[2px] w-[10px] rounded-full bg-[#2670b8]" />}
            </button>
          ))}
        </div>
      </div>

      <div className="flex items-center justify-end pr-3">
        <button type="button" aria-label="Hidden icons" className="mr-[10px]">
          <ChevronUp className="h-[11px] w-[11px]" />
        </button>
        <button type="button" aria-label="Microphone" className="mr-[9px] text-[#2a6fae]">
          <Mic className="h-3 w-3" />
        </button>
        <button type="button" aria-label="Network and sound" className="mr-[10px] flex items-center gap-1">
          <svg viewBox="0 0 12 12" className="h-3 w-3" fill="none" stroke="#2d2d2d">
            <path d="M8 1.500H1.500v7h8V6M4 10.500h4M8.500 2v2.500h2.500V1.500M10 4.500v4" />
          </svg>
          <Volume2 className="h-[11px] w-[11px]" />
        </button>
        <time dateTime="2026-02-04T08:18" className="flex flex-col text-right leading-[11px]">
          <span>8:18 AM</span>
          <span>2/4/2026</span>
        </time>
      </div>
    </footer>
  );
}

export default function App() {
  return (
    <div className="relative flex min-h-screen flex-col overflow-hidden bg-[#20272e] font-['Lato','Segoe_UI',sans-serif] text-[8px] leading-[10px] text-[#e4e7e9]">
      <TitleBar />
      <RibbonTabs />
      <Ribbon />
      <div className="flex min-h-0 flex-1">
        <ModelBrowser />
        <div className="flex min-w-0 flex-1 flex-col">
          <Viewport />
          <DocumentTabs />
        </div>
      </div>
      <div className="flex h-4 flex-none items-center bg-[#2c343d] pl-px">
        <p className="flex-1">Select plane to create sketch or an existing sketch to edit</p>
        <span className="flex h-[14px] w-[27px] items-center border-l border-[#c3c8cc] pl-[6px]">1</span>
        <span className="flex h-[14px] w-[26px] items-center border-x border-[#c3c8cc] pl-[5px]">3</span>
      </div>
      <Taskbar />
      <SharingBanner />
    </div>
  );
}
